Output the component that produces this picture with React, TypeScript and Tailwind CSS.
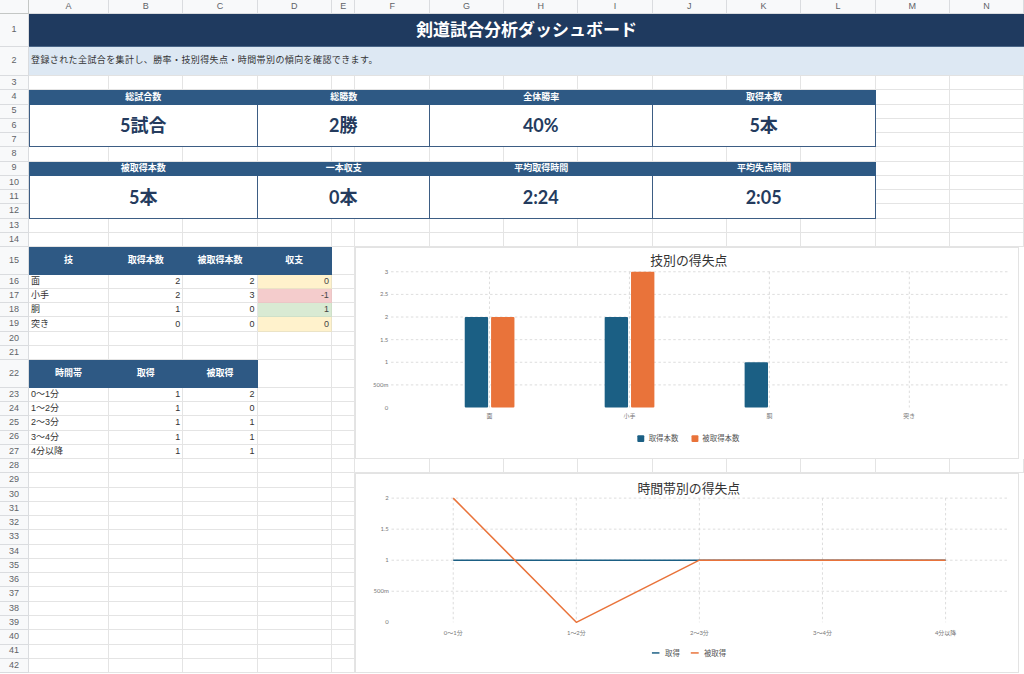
import React from "react";

const COLS = ["A", "B", "C", "D", "E", "F", "G", "H", "I", "J", "K", "L", "M", "N"];
const LAST_ROW = 42;

const BLUE = "#1b5f84";
const ORANGE = "#e9733a";
const CHART_FONT = "Lato, 'Noto Sans CJK JP', sans-serif";

type Kind = "hdr" | "lbl" | "num" | "yel" | "red" | "grn";

const kindCls: Record<Kind, string> = {
  hdr: "bg-[#2e5984] text-white font-bold justify-center border-r border-b border-[#2e5984]",
  lbl: "justify-start pl-[2px] text-[#333] border-r border-b border-[#e4e4e4]",
  num: "justify-end pr-[2px] text-[#333] border-r border-b border-[#e4e4e4]",
  yel: "bg-[#fff2cc] justify-end pr-[2px] text-[#444] border-r border-b border-[#ebe3c6]",
  red: "bg-[#f4cccc] justify-end pr-[2px] text-[#444] border-r border-b border-[#ebc6c6]",
  grn: "bg-[#d9ead3] justify-end pr-[2px] text-[#444] border-r border-b border-[#cfe0c9]",
};

// sheet cells: key "row-col", col 1 = A
const data: Record<string, [string, Kind]> = {};
function putRow(r: number, vals: [string, Kind][]) {
  vals.forEach((v, i) => {
    data[`${r}-${i + 1}`] = v;
  });
}

putRow(15, [["技", "hdr"], ["取得本数", "hdr"], ["被取得本数", "hdr"], ["収支", "hdr"]]);
putRow(16, [["面", "lbl"], ["2", "num"], ["2", "num"], ["0", "yel"]]);
putRow(17, [["小手", "lbl"], ["2", "num"], ["3", "num"], ["-1", "red"]]);
putRow(18, [["胴", "lbl"], ["1", "num"], ["0", "num"], ["1", "grn"]]);
putRow(19, [["突き", "lbl"], ["0", "num"], ["0", "num"], ["0", "yel"]]);

putRow(22, [["時間帯", "hdr"], ["取得", "hdr"], ["被取得", "hdr"]]);
putRow(23, [["0～1分", "lbl"], ["1", "num"], ["2", "num"]]);
putRow(24, [["1～2分", "lbl"], ["1", "num"], ["0", "num"]]);
putRow(25, [["2～3分", "lbl"], ["1", "num"], ["1", "num"]]);
putRow(26, [["3～4分", "lbl"], ["1", "num"], ["1", "num"]]);
putRow(27, [["4分以降", "lbl"], ["1", "num"], ["1", "num"]]);

function KpiHeader({ label }: { label: string }) {
  return (
    <div className="flex h-full items-center justify-center bg-[#2e5984] text-[9px] font-bold leading-none text-white">
      {label}
    </div>
  );
}

function KpiValue({ value, first }: { value: string; first?: boolean }) {
  return (
    <div
      className={
        first
          ? "flex h-full items-center justify-center border-x-[1.5px] border-b-[1.5px] border-[#3d5d84] bg-white"
          : "flex h-full items-center justify-center border-r-[1.5px] border-b-[1.5px] border-[#3d5d84] bg-white"
      }
    >
      <span className="font-['Lato','Noto_Sans_CJK_JP',sans-serif] text-[18px] font-bold leading-none text-[#243b5e]">
        {value}
      </span>
    </div>
  );
}

function TechChart() {
  const y = (v: number) => 161.1 - 45.7 * v;
  const cx = (i: number) => 132.7 + 141.33 * i;
  const cats = [
    { label: "面", a: 2, b: 2 },
    { label: "小手", a: 2, b: 3 },
    { label: "胴", a: 1, b: 0 },
    { label: "突き", a: 0, b: 0 },
  ];
  const ticks: [number, string][] = [
    [0, "0"],
    [0.5, "500m"],
    [1, "1"],
    [1.5, "1.5"],
    [2, "2"],
    [2.5, "2.5"],
    [3, "3"],
  ];
  return (
    <svg width="100%" height="100%" viewBox="0 0 664 212" fontFamily={CHART_FONT}>
      <text x={334} y={17} fontSize={13} fill="#333" textAnchor="middle">
        技別の得失点
      </text>
      {ticks.map(([v, l]) => (
        <g key={l}>
          {v > 0 && (
            <line x1={33.3} x2={656} y1={y(v)} y2={y(v)} stroke="#d4d4d4" strokeWidth={0.8} strokeDasharray="2.5 2.5" />
          )}
          <text x={30.5} y={y(v) + 2} fontSize={6} fill="#777" textAnchor="end">
            {l}
          </text>
        </g>
      ))}
      {cats.map((c, i) => (
        <g key={c.label}>
          <line x1={cx(i)} x2={cx(i)} y1={y(3)} y2={y(0)} stroke="#d4d4d4" strokeWidth={0.8} strokeDasharray="2.5 2.5" />
          {c.a > 0 && <rect x={cx(i) - 25} y={y(c.a)} width={23.6} height={y(0) - y(c.a)} rx={1} fill={BLUE} />}
          {c.b > 0 && <rect x={cx(i) + 1.6} y={y(c.b)} width={23.6} height={y(0) - y(c.b)} rx={1} fill={ORANGE} />}
          <text x={cx(i)} y={172} fontSize={6} fill="#777" textAnchor="middle">
            {c.label}
          </text>
        </g>
      ))}
      <rect x={282} y={189} width={7} height={7} rx={1} fill={BLUE} />
      <text x={293.5} y={195.2} fontSize={7.5} fill="#555">
        取得本数
      </text>
      <rect x={336.7} y={189} width={7} height={7} rx={1} fill={ORANGE} />
      <text x={347.7} y={195.2} fontSize={7.5} fill="#555">
        被取得本数
      </text>
    </svg>
  );
}

function TimeChart() {
  const y = (v: number) => 150 - 62.8 * v;
  const cx = (i: number) => 95.7 + 124.5 * i;
  const labels = ["0～1分", "1～2分", "2～3分", "3～4分", "4分以降"];
  const got = [1, 1, 1, 1, 1];
  const lost = [2, 0, 1, 1, 1];
  const ticks: [number, string][] = [
    [0, "0"],
    [0.5, "500m"],
    [1, "1"],
    [1.5, "1.5"],
    [2, "2"],
  ];
  const pts = (vals: number[]) => vals.map((v, i) => `${cx(i)},${y(v)}`).join(" ");
  return (
    <svg width="100%" height="100%" viewBox="0 0 664 200" fontFamily={CHART_FONT}>
      <text x={334} y={19} fontSize={13} fill="#333" textAnchor="middle">
        時間帯別の得失点
      </text>
      {ticks.map(([v, l]) => (
        <g key={l}>
          {v > 0 && (
            <line x1={33.3} x2={656} y1={y(v)} y2={y(v)} stroke="#d4d4d4" strokeWidth={0.8} strokeDasharray="2.5 2.5" />
          )}
          <text x={30.5} y={y(v) + 2} fontSize={6} fill="#777" textAnchor="end">
            {l}
          </text>
        </g>
      ))}
      {labels.map((l, i) => (
        <g key={l}>
          <line x1={cx(i)} x2={cx(i)} y1={y(2)} y2={y(0)} stroke="#d4d4d4" strokeWidth={0.8} strokeDasharray="2.5 2.5" />
          <text x={cx(i)} y={162.5} fontSize={6} fill="#777" textAnchor="middle">
            {l}
          </text>
        </g>
      ))}
      <polyline points={pts(got)} fill="none" stroke={BLUE} strokeWidth={1.5} />
      <polyline points={pts(lost)} fill="none" stroke={ORANGE} strokeWidth={1.5} strokeLinejoin="round" />
      <line x1={296.7} x2={304.3} y1={181} y2={181} stroke={BLUE} strokeWidth={1.5} />
      <text x={310} y={183.8} fontSize={7.5} fill="#555">
        取得
      </text>
      <line x1={336} x2={344} y1={181} y2={181} stroke={ORANGE} strokeWidth={1.5} />
      <text x={349.3} y={183.8} fontSize={7.5} fill="#555">
        被取得
      </text>
    </svg>
  );
}

type Block = { r: number; c: number; rs: number; cs: number; cls: string; node: React.ReactNode };

const kpis = [
  { label: "総試合数", value: "5試合", col: "col-start-2 col-span-3", c: 1 },
  { label: "総勝数", value: "2勝", col: "col-start-5 col-span-3", c: 4 },
  { label: "全体勝率", value: "40%", col: "col-start-8 col-span-3", c: 7 },
  { label: "取得本数", value: "5本", col: "col-start-11 col-span-3", c: 10 },
];
const kpis2 = [
  { label: "被取得本数", value: "5本" },
  { label: "一本収支", value: "0本" },
  { label: "平均取得時間", value: "2:24" },
  { label: "平均失点時間", value: "2:05" },
];

const blocks: Block[] = [
  {
    r: 1,
    c: 1,
    rs: 1,
    cs: 14,
    cls: "row-start-2 col-start-2 col-span-14",
    node: (
      <div className="flex h-full items-center justify-center border-b border-[#4a6688] bg-[#1f3a5f] font-['Lato','Noto_Sans_CJK_JP',sans-serif] text-[17px] font-bold text-white">
        剣道試合分析ダッシュボード
      </div>
    ),
  },
  {
    r: 2,
    c: 1,
    rs: 1,
    cs: 14,
    cls: "row-start-3 col-start-2 col-span-14",
    node: (
      <div className="flex h-full items-center border-b border-[#e2e2e2] bg-[#dde8f3] pl-[2px] text-[9px] tracking-[0.4px] text-[#333]">
        登録された全試合を集計し、勝率・技別得失点・時間帯別の傾向を確認できます。
      </div>
    ),
  },
  ...kpis.map((k) => ({
    r: 4,
    c: k.c,
    rs: 1,
    cs: 3,
    cls: "row-start-5 " + k.col,
    node: <KpiHeader label={k.label} />,
  })),
  ...kpis.map((k, i) => ({
    r: 5,
    c: k.c,
    rs: 3,
    cs: 3,
    cls: "row-start-6 row-span-3 " + k.col,
    node: <KpiValue value={k.value} first={i === 0} />,
  })),
  ...kpis2.map((k, i) => ({
    r: 9,
    c: kpis[i].c,
    rs: 1,
    cs: 3,
    cls: "row-start-10 " + kpis[i].col,
    node: <KpiHeader label={k.label} />,
  })),
  ...kpis2.map((k, i) => ({
    r: 10,
    c: kpis[i].c,
    rs: 3,
    cs: 3,
    cls: "row-start-11 row-span-3 " + kpis[i].col,
    node: <KpiValue value={k.value} first={i === 0} />,
  })),
  {
    r: 15,
    c: 6,
    rs: 13,
    cs: 9,
    cls: "row-start-16 row-span-13 col-start-7 col-span-9",
    node: (
      <div className="mr-[5px] h-full border border-[#e3e3e3] bg-white">
        <TechChart />
      </div>
    ),
  },
  {
    r: 29,
    c: 6,
    rs: 14,
    cs: 9,
    cls: "row-start-30 row-span-14 col-start-7 col-span-9",
    node: (
      <div className="mr-[5px] h-full border border-[#e3e3e3] bg-white">
        <TimeChart />
      </div>
    ),
  },
];

export default function App() {
  const covered = new Set<string>();
  blocks.forEach((b) => {
    for (let r = b.r; r < b.r + b.rs; r++) for (let c = b.c; c < b.c + b.cs; c++) covered.add(`${r}-${c}`);
  });

  const cells: React.ReactNode[] = [];
  for (let r = 0; r <= LAST_ROW; r++) {
    for (let c = 0; c <= 14; c++) {
      const key = `${r}-${c}`;
      if (covered.has(key)) continue;
      if (r === 0 && c === 0) {
        cells.push(<div key={key} className="border-r border-b border-[#c4c7c5] bg-[#f8f9fa]" />);
      } else if (r === 0) {
        cells.push(
          <div key={key} className="flex items-center justify-center border-r border-b border-[#dadcdf] bg-[#f8f9fa] text-[9px] text-[#5f6368]">
            {COLS[c - 1]}
          </div>
        );
      } else if (c === 0) {
        cells.push(
          <div key={key} className="flex items-center justify-center border-r border-b border-[#dadcdf] bg-[#f8f9fa] text-[9px] text-[#5f6368]">
            {r}
          </div>
        );
      } else {
        const d = data[key];
        if (d) {
          cells.push(
            <div key={key} className={"flex items-center overflow-hidden whitespace-nowrap text-[9px] leading-none " + kindCls[d[1]]}>
              {d[0]}
            </div>
          );
        } else {
          cells.push(<div key={key} className="border-r border-b border-[#e4e4e4] bg-white" />);
        }
      }
    }
  }

  return (
    <div className="h-[674px] w-[1024px] overflow-hidden bg-white font-['Liberation_Sans','Noto_Sans_CJK_JP',sans-serif]">
      <div className="grid grid-cols-[29px_80px_repeat(3,74.3px)_23.6px_repeat(9,74.3px)] grid-rows-[14.3px_32.4px_29.3px_repeat(12,14.27px)_27.5px_repeat(6,14.27px)_27.5px_repeat(20,14.27px)]">
        {cells}
        {blocks.map((b, i) => (
          <div key={"b" + i} className={b.cls}>
            {b.node}
          </div>
        ))}
      </div>
    </div>
  );
}
